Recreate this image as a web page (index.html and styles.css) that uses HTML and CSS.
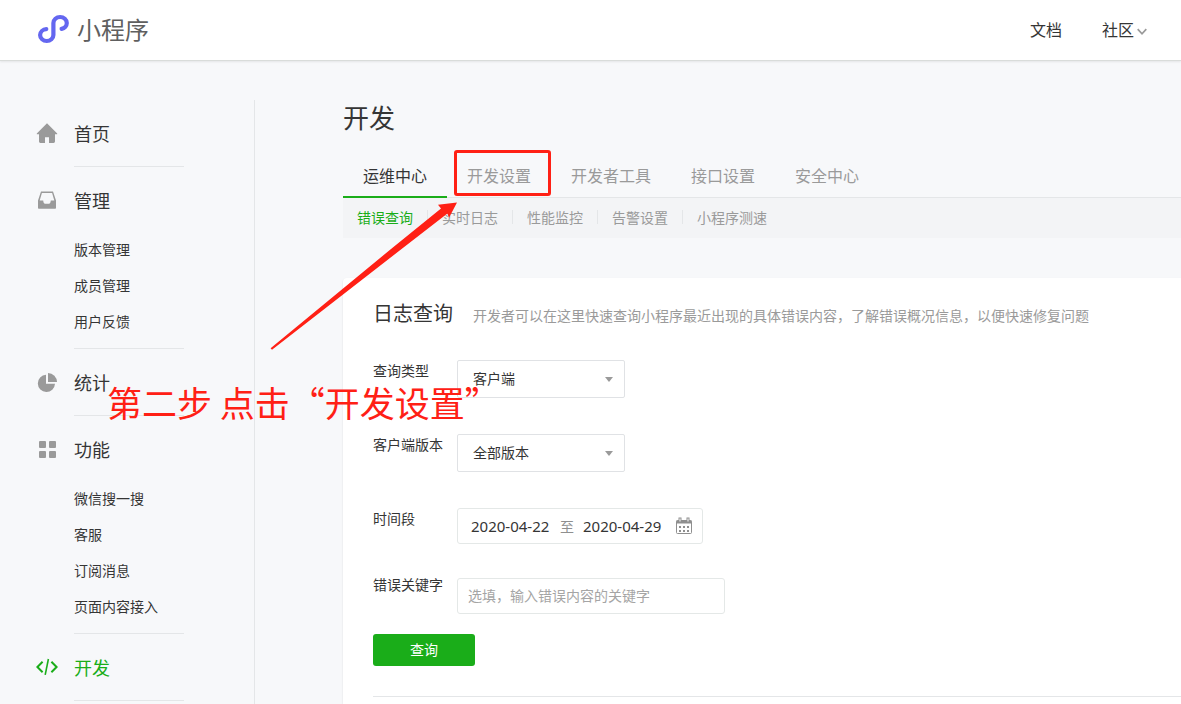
FILE: index.html
```html
<!DOCTYPE html>
<html lang="zh-CN">
<head>
	<meta charset="UTF-8">
	<meta name="viewport" content="width=device-width, initial-scale=1">
	<title>小程序</title>
	<link rel="stylesheet" href="styles.css">
</head>
<body>
	<header class="header">
		<a class="logo" href="#">
			<svg width="32" height="30" viewBox="0 0 32 30" fill="none" stroke="#6467f0" stroke-width="4.2" stroke-linecap="round">
				<path d="M9.3 15.1A6.5 6.1 0 0 0 3.1 21A6.65 6 0 0 0 16.4 21V9A6.7 6 0 0 1 29.8 9A6.6 6.1 0 0 1 24.6 14.9"/>
			</svg>
			<span>小程序</span>
		</a>
		<nav class="top-nav">
			<a href="#">文档</a>
			<a href="#">社区<svg class="chevron" width="10" height="8" viewBox="0 0 10 8" fill="none" stroke="#9a9a9a" stroke-width="1.7"><path d="M.7 1.2L5 5.8L9.3 1.2"/></svg></a>
		</nav>
	</header>

	<div class="page">
		<nav class="sidebar">
			<div class="menu-group">
				<a class="menu-title" href="#">
					<svg width="22" height="22" viewBox="0 0 22 22" fill="#9a9a9a"><path d="M11 1.2L21.2 11.6V12.3H19V19.6Q19 21 17.6 21H13V15.3H9V21H4.4Q3 21 3 19.6V12.3H.8V11.6Z"/></svg>
					首页
				</a>
			</div>
			<div class="menu-group">
				<a class="menu-title" href="#">
					<svg width="22" height="22" viewBox="0 0 22 22" fill="#9a9a9a" fill-rule="evenodd"><path d="M5 2.4H17L20 11.5V19Q20 19.8 19.2 19.8H2.8Q2 19.8 2 19V11.5ZM5.9 3.9L3.7 11.4H7.2Q7.6 14.7 9 14.7H13Q14.4 14.7 14.8 11.4H18.3L16.1 3.9Z"/></svg>
					管理
				</a>
				<ul class="submenu">
					<li><a href="#">版本管理</a></li>
					<li><a href="#">成员管理</a></li>
					<li><a href="#">用户反馈</a></li>
				</ul>
			</div>
			<div class="menu-group">
				<a class="menu-title" href="#">
					<svg width="22" height="22" viewBox="0 0 22 22" fill="#9a9a9a"><path d="M10 3.8A8.6 8.6 0 1 0 19 12.8H10Z"/><path d="M12 2A9 9 0 0 1 21 11H12Z"/></svg>
					统计
				</a>
			</div>
			<div class="menu-group">
				<a class="menu-title" href="#">
					<svg width="22" height="22" viewBox="0 0 22 22" fill="#9a9a9a"><rect x="3" y="3" width="7" height="7" rx="1"/><rect x="13" y="3" width="7" height="7" rx="1"/><rect x="3" y="13" width="7" height="7" rx="1"/><rect x="13" y="13" width="7" height="7" rx="1"/></svg>
					功能
				</a>
				<ul class="submenu">
					<li><a href="#">微信搜一搜</a></li>
					<li><a href="#">客服</a></li>
					<li><a href="#">订阅消息</a></li>
					<li><a href="#">页面内容接入</a></li>
				</ul>
			</div>
			<div class="menu-group">
				<a class="menu-title active" href="#">
					<svg width="22" height="22" viewBox="0 0 22 22" fill="none" stroke="#1aad19" stroke-width="2"><path d="M6.6 5.8L1.4 11L6.6 16.2M15.4 5.8L20.6 11L15.4 16.2"/><path stroke-width="1.6" d="M12.4 3L9.2 18.8"/></svg>
					开发
				</a>
			</div>
		</nav>

		<main class="main">
			<h1 class="title">开发</h1>
			<nav class="tabs">
				<a class="active" href="#">运维中心</a>
				<a href="#">开发设置</a>
				<a href="#">开发者工具</a>
				<a href="#">接口设置</a>
				<a href="#">安全中心</a>
			</nav>
			<nav class="sub-tabs">
				<a class="active" href="#">错误查询</a>
				<a href="#">实时日志</a>
				<a href="#">性能监控</a>
				<a href="#">告警设置</a>
				<a href="#">小程序测速</a>
			</nav>

			<section class="card">
				<div class="card-head">
					<h2>日志查询</h2>
					<p>开发者可以在这里快速查询小程序最近出现的具体错误内容，了解错误概况信息，以便快速修复问题</p>
				</div>
				<form>
					<div class="row">
						<label for="type">查询类型</label>
						<div class="select">
							<select id="type"><option>客户端</option></select>
						</div>
					</div>
					<div class="row">
						<label for="version">客户端版本</label>
						<div class="select">
							<select id="version"><option>全部版本</option></select>
						</div>
					</div>
					<div class="row row-date">
						<label for="start">时间段</label>
						<div class="date-range">
							<input type="text" id="start" value="2020-04-22">
							<span>至</span>
							<input type="text" aria-label="结束日期" value="2020-04-29">
							<svg width="18" height="18" viewBox="0 0 18 18" fill="none" stroke="#8f8f8f">
								<rect x="1.5" y="3.5" width="15" height="13" rx="1"/>
								<path d="M1.5 5H16.5" stroke-width="3"/>
								<rect x="4" y="1" width="2" height="4" fill="#fff"/>
								<rect x="12" y="1" width="2" height="4" fill="#fff"/>
								<path stroke-width="2" stroke-dasharray="2 2" d="M4 10H14M4 14H14"/>
							</svg>
						</div>
					</div>
					<div class="row row-keyword">
						<label for="keyword">错误关键字</label>
						<input class="keyword" type="text" id="keyword" placeholder="选填，输入错误内容的关键字">
					</div>
					<button class="btn" type="button">查询</button>
				</form>
				<hr>
			</section>
		</main>
	</div>

	<!-- step marks over the page -->
	<div class="mark-box"></div>
	<svg class="mark-arrow" width="190" height="150" viewBox="0 0 190 150" fill="#ff2015">
		<path d="M.6 148.2L121 49L171 8.6L168 4.8L187 2.4L179 17.8L177.4 13.4L129 51L2 149.8Z"/>
	</svg>
	<p class="mark-text">第二步 点击“开发设置”</p>
</body>
</html>
```

FILE: styles.css
```css
* {
	box-sizing: border-box;
}

body {
	margin: 0;
	position: relative;
	min-height: 100vh;
	display: flex;
	flex-direction: column;
	overflow: hidden;
	background: #f7f8fa;
	color: #353535;
	font-family: "Noto Sans CJK SC", sans-serif;
	font-size: 14px;
}

a {
	color: inherit;
	text-decoration: none;
}

h1, h2, p, ul {
	margin: 0;
	padding: 0;
	font-weight: normal;
}

/* header */
.header {
	display: flex;
	justify-content: space-between;
	align-items: center;
	height: 61px;
	padding: 0 34px 2px 37px;
	background: #fff;
	border-bottom: 1px solid #d9dcda;
	box-shadow: 0 1px 2px rgba(0, 0, 0, 0.08);
}

.logo {
	display: flex;
	align-items: center;
	gap: 8px;
	font-size: 24px;
	line-height: 30px;
	color: #5f5f5f;
}

.top-nav {
	display: flex;
	gap: 40px;
	font-size: 16px;
}

.chevron {
	margin-left: 3px;
}

.page {
	flex: 1;
	display: flex;
	padding-top: 39px;
}

/* sidebar */
.sidebar {
	width: 255px;
	flex-shrink: 0;
	padding-left: 36px;
	border-right: 1px solid #e4e6e8;
}

.menu-title {
	display: flex;
	align-items: center;
	gap: 16px;
	height: 66px;
	font-size: 18px;
}

.menu-group::after {
	content: "";
	display: block;
	width: 110px;
	margin-left: 38px;
	border-bottom: 1px solid #e4e6e8;
}

.submenu {
	list-style: none;
	margin-top: -2px;
	padding: 0 0 9px 38px;
	line-height: 36px;
}

.active {
	color: #1aad19;
}

/* content */
.main {
	flex: 1;
	min-width: 0;
	margin-left: 88px;
	display: flex;
	flex-direction: column;
}

.title {
	font-size: 26px;
	line-height: 34px;
}

.tabs {
	display: flex;
	margin-top: 22px;
	border-bottom: 1px solid #e4e6e8;
	font-size: 16px;
	line-height: 38px;
	color: #9a9a9a;
}

.tabs a {
	padding: 0 20px 2px;
	margin-bottom: -1px;
	border-bottom: 2px solid transparent;
}

.tabs .active {
	color: #353535;
	border-color: #1aad19;
}

.sub-tabs {
	display: flex;
	align-items: center;
	height: 40px;
	padding-bottom: 2px;
	background: #f3f4f6;
	line-height: 14px;
	color: #9a9a9a;
}

.sub-tabs a {
	padding: 0 14px;
}

.sub-tabs a + a {
	border-left: 1px solid #e4e6e8;
}

.sub-tabs .active {
	color: #1aad19;
}

.card {
	flex: 1;
	margin-top: 40px;
	padding: 20px 0 0 30px;
	background: #fff;
	border-radius: 4px 0 0 0;
	box-shadow: 0 1px 2px rgba(0, 0, 0, 0.12);
}

.card-head {
	display: flex;
	align-items: baseline;
	gap: 20px;
	margin-bottom: 30px;
	line-height: 30px;
}

.card-head h2 {
	font-size: 20px;
}

.card-head p {
	color: #9a9a9a;
	white-space: nowrap;
}

/* form */
.row {
	display: flex;
	align-items: flex-start;
	margin-bottom: 36px;
}

.row label {
	width: 84px;
	line-height: 20px;
}

.row-date {
	margin-bottom: 30px;
}

.row-keyword {
	margin-bottom: 20px;
}

.select {
	position: relative;
}

.select::after {
	content: "";
	position: absolute;
	right: 12px;
	top: 17px;
	border: 4px solid transparent;
	border-top: 5px solid #9a9a9a;
	border-bottom: 0;
	pointer-events: none;
}

select {
	appearance: none;
	width: 168px;
	height: 38px;
	padding: 0 15px 2px;
	background: #fff;
	border: 1px solid #e0e2e5;
	border-radius: 2px;
	color: #353535;
	font: inherit;
}

.date-range {
	display: flex;
	align-items: center;
	width: 246px;
	height: 36px;
	padding: 0 9px 0 13px;
	border: 1px solid #e4e8e7;
	border-radius: 3px;
	color: #8f8f8f;
}

.date-range input {
	width: 80px;
	padding: 0;
	border: 0;
	background: none;
	color: #353535;
	font: 15px "Noto Sans", sans-serif;
}

.date-range span {
	margin: 0 9px;
}

.date-range svg {
	margin-left: auto;
}

.keyword {
	width: 268px;
	height: 36px;
	margin-top: 4px;
	padding: 0 10px 2px;
	border: 1px solid #e4e8e7;
	border-radius: 3px;
	font: inherit;
}

.keyword::placeholder {
	color: #a5a5a5;
}

.btn {
	display: block;
	width: 102px;
	height: 32px;
	padding: 0 0 2px;
	border: 0;
	border-radius: 3px;
	background: #1aad19;
	color: #fff;
	font: inherit;
	cursor: pointer;
}

hr {
	margin: 30px 0 0;
	border: 0;
	border-top: 1px solid #e4e6e8;
}

/* step marks */
.mark-box {
	position: absolute;
	left: 454px;
	top: 150px;
	width: 97px;
	height: 46px;
	border: 3px solid #ff2015;
	border-radius: 3px;
}

.mark-arrow {
	position: absolute;
	left: 270px;
	top: 200px;
}

.mark-text {
	position: absolute;
	left: 107px;
	top: 384px;
	font-size: 35px;
	line-height: 36px;
	color: #ff2015;
	white-space: nowrap;
}
```
